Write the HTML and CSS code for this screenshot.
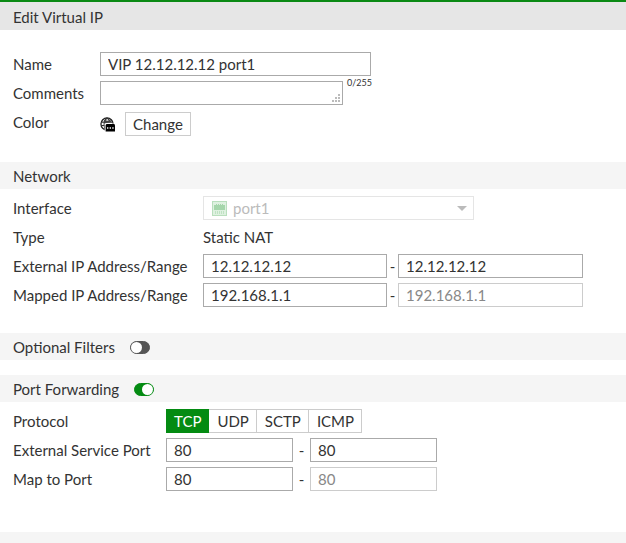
FILE: index.html
```
<!DOCTYPE html>
<html lang="en">
<head>
<meta charset="utf-8">
<title>Edit Virtual IP</title>
<link rel="stylesheet" href="styles.css">
</head>
<body>
<header class="titlebar"><h1>Edit Virtual IP</h1></header>
<form>
  <section class="rows rows-general">
    <div class="row">
      <label for="name">Name</label>
      <input class="field field-wide" id="name" type="text" value="VIP 12.12.12.12 port1">
    </div>
    <div class="row">
      <label for="comments">Comments</label>
      <div class="comment">
        <div class="comment-box">
          <textarea class="field" id="comments" rows="1"></textarea>
          <svg class="grip" viewBox="0 0 8 8" aria-hidden="true"><path d="M6 0h2v2H6zM3 3h2v2H3zM6 3h2v2H6zM0 6h2v2H0zM3 6h2v2H3zM6 6h2v2H6z"/></svg>
        </div>
        <span class="counter">0/255</span>
      </div>
    </div>
    <div class="row row-color">
      <span class="label">Color</span>
      <div class="color">
        <svg class="globe" viewBox="0 0 16 16" aria-hidden="true">
          <circle cx="7.500" cy="7.500" r="6.500" fill="#fff" stroke="#222" stroke-width="1.400"/>
          <path d="M2 5.500h11M1.500 9H7M3 12.200h4M7.500 1C3.500 4 3.500 11 6.500 14M7.500 1c2 1.300 3 3 3.300 5" fill="none" stroke="#333" stroke-width="1.200"/>
          <path d="M4 3l4 1 3-1 1 2-4 1-3 1z" fill="#444"/>
          <rect x="5" y="7" width="11" height="9" fill="#fff"/>
          <path d="M6 9q0-1.500 1.500-1.500h7Q16 7.500 16 9v6.500H6z" fill="#000"/>
          <path d="M7.500 11h1.400v1.400H7.500zM10.300 11h1.400v1.400h-1.400zM13.100 11h1.400v1.400h-1.400z" fill="#fff"/>
        </svg>
        <button class="button" type="button">Change</button>
      </div>
    </div>
  </section>

  <section>
    <h2 class="bar">Network</h2>
    <div class="rows rows-network">
      <div class="row">
        <label for="interface">Interface</label>
        <div class="picker">
          <svg class="port" viewBox="0 0 15 15" aria-hidden="true">
            <rect x=".5" y=".5" width="14" height="14" fill="#def1e0" stroke="#b9dfbd"/>
            <path d="M2 9V4h2V3h1v1h1V3h1v1h1V3h1v1h1V3h1v1h2v5z" fill="#a5d6ab"/>
            <path d="M3.500 10v3M5.500 10v3M7.500 10v3M9.500 10v3M11.500 10v3" stroke="#bfe2c3"/>
          </svg>
          <select class="field" id="interface" disabled><option>port1</option></select>
          <svg class="arrow" viewBox="0 0 10 5" aria-hidden="true"><path d="M0 0h10L5 5z"/></svg>
        </div>
      </div>
      <div class="row">
        <span class="label">Type</span>
        <span>Static NAT</span>
      </div>
      <div class="row">
        <label for="ext-from">External IP Address/Range</label>
        <div class="range">
          <input class="field" id="ext-from" type="text" value="12.12.12.12">
          <span class="dash">-</span>
          <input class="field" type="text" value="12.12.12.12" aria-label="External IP range end">
        </div>
      </div>
      <div class="row">
        <label for="map-from">Mapped IP Address/Range</label>
        <div class="range">
          <input class="field" id="map-from" type="text" value="192.168.1.1">
          <span class="dash">-</span>
          <input class="field" type="text" value="192.168.1.1" aria-label="Mapped IP range end" disabled>
        </div>
      </div>
    </div>
  </section>

  <section class="optional">
    <h2 class="bar"><label for="filters">Optional Filters</label><input class="toggle" id="filters" type="checkbox"></h2>
  </section>

  <section>
    <h2 class="bar"><label for="forwarding">Port Forwarding</label><input class="toggle" id="forwarding" type="checkbox" checked></h2>
    <div class="rows rows-ports">
      <div class="row">
        <span class="label" id="protocol">Protocol</span>
        <div class="segments" role="radiogroup" aria-labelledby="protocol">
          <label class="segment"><input type="radio" name="protocol" checked><span>TCP</span></label>
          <label class="segment"><input type="radio" name="protocol"><span>UDP</span></label>
          <label class="segment"><input type="radio" name="protocol"><span>SCTP</span></label>
          <label class="segment"><input type="radio" name="protocol"><span>ICMP</span></label>
        </div>
      </div>
      <div class="row">
        <label for="service-from">External Service Port</label>
        <div class="range range-port">
          <input class="field" id="service-from" type="text" value="80">
          <span class="dash">-</span>
          <input class="field" type="text" value="80" aria-label="External service port end">
        </div>
      </div>
      <div class="row">
        <label for="port-from">Map to Port</label>
        <div class="range range-port">
          <input class="field" id="port-from" type="text" value="80">
          <span class="dash">-</span>
          <input class="field" type="text" value="80" aria-label="Map to port end" disabled>
        </div>
      </div>
    </div>
  </section>
</form>
<footer class="footer"></footer>
</body>
</html>
```
FILE: styles.css
```
* {
  box-sizing: border-box;
}

body {
  margin: 0;
  background: #fff;
  color: #333;
  font: 15px/24px Lato, sans-serif;
}

h1,
h2 {
  margin: 0;
  font-size: 15px;
  font-weight: 400;
}

input,
select,
textarea,
button {
  margin: 0;
  color: inherit;
  font: inherit;
}

.titlebar {
  padding: 3px 13px 1px;
  border-top: 2px solid #0b8a14;
  background: #e6e6e6;
}

.bar {
  display: flex;
  align-items: center;
  gap: 15px;
  padding: 2px 13px 1px;
  background: #f5f5f5;
}

.rows {
  display: grid;
  gap: 5px;
  padding: 7px 13px 26px;
}

.rows-general {
  --label: 87px;
  padding-top: 22px;
}

.rows-network {
  --label: 190px;
}

.rows-ports {
  --label: 153px;
  padding-bottom: 41px;
}

.row {
  display: grid;
  grid-template-columns: var(--label) minmax(0, 1fr);
  align-items: start;
}

.field {
  display: block;
  width: 100%;
  height: 24px;
  padding: 0 7px;
  border: 1px solid #aaa;
  border-radius: 0;
  background: #fff;
  line-height: 22px;
}

.field:disabled {
  border-color: #ccc;
  color: #888;
}

.field-wide {
  max-width: 271px;
}

.comment {
  display: flex;
  gap: 4px;
}

.comment-box {
  position: relative;
  flex: 0 1 243px;
}

.comment-box .field {
  overflow: hidden;
  resize: none;
}

.grip {
  position: absolute;
  right: 3px;
  bottom: 3px;
  width: 8px;
  height: 8px;
  fill: #bbb;
}

.counter {
  font-size: 9px;
  line-height: 4px;
}

.color {
  display: flex;
  align-items: center;
  gap: 10px;
  padding-top: 2px;
}

.globe {
  width: 15px;
  height: 15px;
}

.button {
  height: 24px;
  padding: 0 7px;
  border: 1px solid #ccc;
  background: #fff;
  line-height: 22px;
}

.picker {
  position: relative;
  max-width: 271px;
}

.picker .field {
  appearance: none;
  padding-left: 29px;
  border-color: #e5e5e5;
  color: #bbb;
  opacity: 1;
}

.port {
  position: absolute;
  top: 5px;
  left: 9px;
  width: 15px;
  height: 15px;
}

.arrow {
  position: absolute;
  top: 10px;
  right: 7px;
  width: 10px;
  height: 5px;
  fill: #bbb;
}

.range {
  display: grid;
  grid-template-columns: minmax(0, 184px) 11px minmax(0, 185px);
}

.range-port {
  grid-template-columns: minmax(0, 127px) 17px minmax(0, 127px);
}

.dash {
  text-align: center;
}

.optional {
  margin-bottom: 15px;
}

.toggle {
  width: 20px;
  height: 13px;
  border: 1px solid #555;
  border-radius: 7px;
  appearance: none;
  background: #555;
}

.toggle::before {
  display: block;
  width: 11px;
  height: 11px;
  border-radius: 50%;
  background: #fff;
  content: "";
}

.toggle:checked {
  border-color: #048b12;
  background: #048b12;
}

.toggle:checked::before {
  margin-left: auto;
}

.segments {
  display: flex;
}

.segment {
  position: relative;
}

.segment input {
  position: absolute;
  inset: 0;
  opacity: 0;
}

.segment span {
  display: block;
  height: 24px;
  padding: 0 7px 0 8px;
  border: 1px solid #ccc;
  border-left-width: 0;
  line-height: 22px;
}

.segment input:checked + span {
  padding-left: 7px;
  border-color: #048b12;
  border-left-width: 1px;
  background: #048b12;
  color: #fff;
}

.footer {
  height: 11px;
  background: #f5f5f5;
}
```
